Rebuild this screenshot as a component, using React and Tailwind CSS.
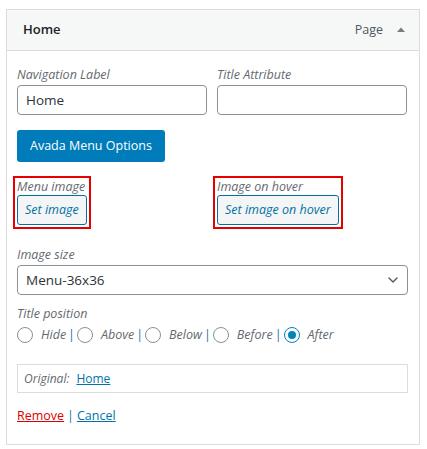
import { ChevronDown } from "lucide-react";

const font = { fontFamily: '"Open Sans", "Noto Sans", sans-serif' };

function Radio({ label, checked, last }) {
  return (
    <label className="flex items-center">
      <span
        className={`w-4 h-4 rounded-full border border-[#8c8f94] flex items-center justify-center bg-white ${
          checked ? "border-[#0085ba]" : ""
        }`}
      >
        {checked && <span className="w-2 h-2 rounded-full bg-[#0085ba]" />}
      </span>
      <span className="italic text-[#646970] ml-2">{label}</span>
      {!last && <span className="text-[#2271b1] ml-[2px] mr-[2px]">|</span>}
    </label>
  );
}

export default function App() {
  return (
    <div className="w-[427px] h-[449px] bg-white pt-[9px] pl-[6px]" style={font}>
      <div className="w-[414px] border border-[#dcdcde] text-[12.5px] text-[#2c3338]">
        <div className="h-[41px] bg-[#f6f7f7] border-b border-[#dcdcde] flex items-center pl-4 pr-3">
          <span className="font-semibold text-[13px] text-[#1d2327]">Home</span>
          <span className="ml-auto text-[#50575e] text-[12.5px]">Page</span>
          <svg width="10" height="8" viewBox="0 0 10 8" className="ml-[13px] mr-[1px]">
            <path d="M1 6 L5 1.5 L9 6 Z" fill="#787c82" />
          </svg>
        </div>
        <div className="pl-[10px] pr-[11px] pt-[14px] pb-[18px]">
          <div className="flex gap-[10px]">
            <div className="w-[190px]">
              <div className="italic text-[#646970] leading-[20px]">Navigation Label</div>
              <div className="h-[30px] border border-[#8c8f94] rounded-[4px] px-2 flex items-center text-[13.5px] text-[#2c3338]">
                Home
              </div>
            </div>
            <div className="w-[190px]">
              <div className="italic text-[#646970] leading-[20px]">Title Attribute</div>
              <div className="h-[30px] border border-[#8c8f94] rounded-[4px]" />
            </div>
          </div>
          <button className="mt-[15px] h-[32px] px-[13px] rounded-[3px] bg-[#007cba] text-white text-[12.5px]">
            Avada Menu Options
          </button>
          <div className="flex mt-[14px]">
            <div className="w-[200px] ml-[-4px]">
              <div className="inline-block border-2 border-[#e60000] pl-[2px] pr-[2px] pb-[2px]">
                <div className="italic text-[#646970] leading-[17px]">Menu image</div>
                <button className="h-[30px] px-[7px] rounded-[3px] border border-[#0071a1] bg-[#f3f5f6] italic text-[#0071a1]">
                  Set image
                </button>
              </div>
            </div>
            <div>
              <div className="inline-block border-2 border-[#e60000] pl-[2px] pr-[2px] pb-[2px]">
                <div className="italic text-[#646970] leading-[17px]">Image on hover</div>
                <button className="h-[30px] px-[7px] rounded-[3px] border border-[#0071a1] bg-[#f3f5f6] italic text-[#0071a1]">
                  Set image on hover
                </button>
              </div>
            </div>
          </div>
          <div className="italic text-[#646970] leading-[20px] mt-[16px]">Image size</div>
          <div className="h-[30px] border border-[#8c8f94] rounded-[4px] pl-2 pr-[6px] flex items-center text-[13.5px]">
            Menu-36x36
            <ChevronDown size={16} strokeWidth={2} className="ml-auto text-[#50575e]" />
          </div>
          <div className="italic text-[#646970] leading-[20px] mt-[9px]">Title position</div>
          <div className="flex items-center leading-[22px]">
            <Radio label="Hide" />
            <Radio label="Above" />
            <Radio label="Below" />
            <Radio label="Before" />
            <Radio label="After" checked last />
          </div>
          <div className="mt-[18px] h-[29px] border border-[#dcdcde] flex items-center px-[6px] text-[12px]">
            <span className="italic text-[#646970]">Original:</span>
            <a className="ml-[7px] text-[#0073aa] underline">Home</a>
          </div>
          <div className="mt-[14px] text-[12.5px]">
            <a className="text-[#d00] underline">Remove</a>
            <span className="text-[#2271b1] mx-[3px]">|</span>
            <a className="text-[#0073aa] underline">Cancel</a>
          </div>
        </div>
      </div>
    </div>
  );
}
